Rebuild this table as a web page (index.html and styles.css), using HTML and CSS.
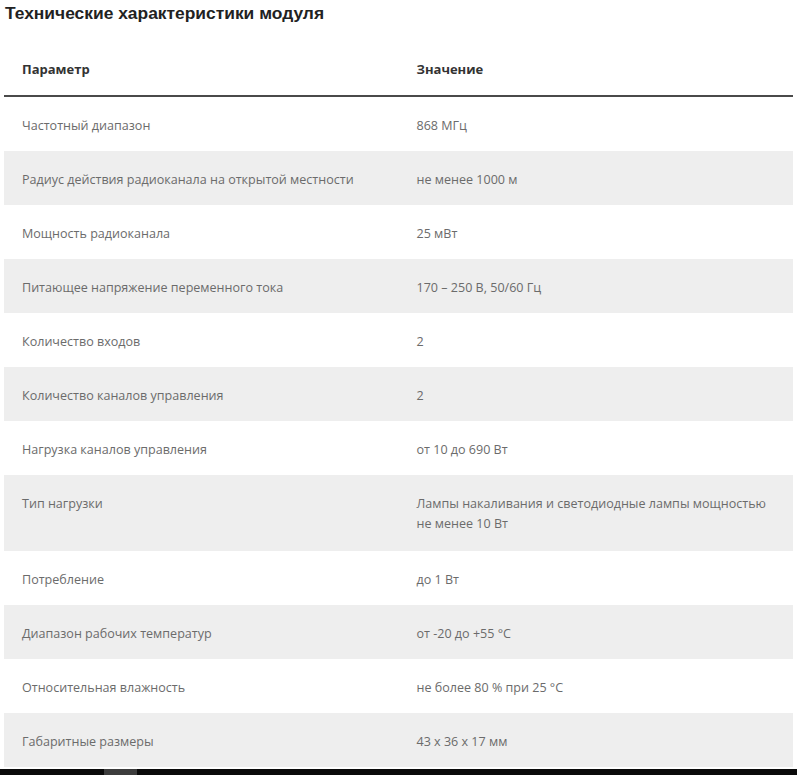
FILE: index.html
```html
<!DOCTYPE html>
<html lang="ru">
<head>
<meta charset="utf-8">
<title>Технические характеристики модуля</title>
<link rel="stylesheet" href="styles.css">
</head>
<body>
<h2 class="title">Технические характеристики модуля</h2>
<table class="specs">
  <thead>
    <tr><th>Параметр</th><th>Значение</th></tr>
  </thead>
  <tbody>
    <tr><td>Частотный диапазон</td><td>868 МГц</td></tr>
    <tr><td>Радиус действия радиоканала на открытой местности</td><td>не менее 1000 м</td></tr>
    <tr><td>Мощность радиоканала</td><td>25 мВт</td></tr>
    <tr><td>Питающее напряжение переменного тока</td><td>170 – 250 В, 50/60 Гц</td></tr>
    <tr><td>Количество входов</td><td>2</td></tr>
    <tr><td>Количество каналов управления</td><td>2</td></tr>
    <tr><td>Нагрузка каналов управления</td><td>от 10 до 690 Вт</td></tr>
    <tr class="tall"><td>Тип нагрузки</td><td>Лампы накаливания и светодиодные лампы мощностью не менее 10 Вт</td></tr>
    <tr><td>Потребление</td><td>до 1 Вт</td></tr>
    <tr><td>Диапазон рабочих температур</td><td>от -20 до +55 °С</td></tr>
    <tr><td>Относительная влажность</td><td>не более 80 % при 25 °С</td></tr>
    <tr><td>Габаритные размеры</td><td>43 x 36 x 17 мм</td></tr>
  </tbody>
</table>
<div class="scrollbar"><div class="thumb"></div></div>
</body>
</html>
```
FILE: styles.css
```css
html, body {
  margin: 0;
  padding: 0;
  background: #ffffff;
}
body {
  font-family: "Open Sans", "Liberation Sans", sans-serif;
  color: #666666;
  overflow: hidden;
}
.title {
  margin: 0;
  padding: 3px 0 0 5px;
  font-family: "Liberation Sans", Arial, sans-serif;
  font-size: 17.4px;
  font-weight: bold;
  line-height: 20px;
  color: #222222;
}
.specs {
  margin: 23px 4px 0 4px;
  width: 789px;
  border-collapse: collapse;
  table-layout: fixed;
}
.specs th {
  text-align: left;
  font-size: 13px;
  font-weight: 700;
  color: #333333;
  line-height: 20px;
  padding: 13px 18px 16px 18px;
  border-bottom: 2px solid #4a4a4a;
}
.specs td {
  font-size: 12.55px;
  line-height: 20px;
  padding: 19px 18px 15px 18px;
  vertical-align: top;
  color: #6b6b6b;
}
.specs tr.tall td {
  padding-bottom: 17px;
}
.specs tbody tr:nth-child(even) td {
  background: #eeeeee;
}
.scrollbar {
  margin-top: 2px;
  height: 8px;
  background: #0a0a0a;
}
.thumb {
  margin-left: 104px;
  width: 33px;
  height: 8px;
  background: #3c3c3c;
}
```
